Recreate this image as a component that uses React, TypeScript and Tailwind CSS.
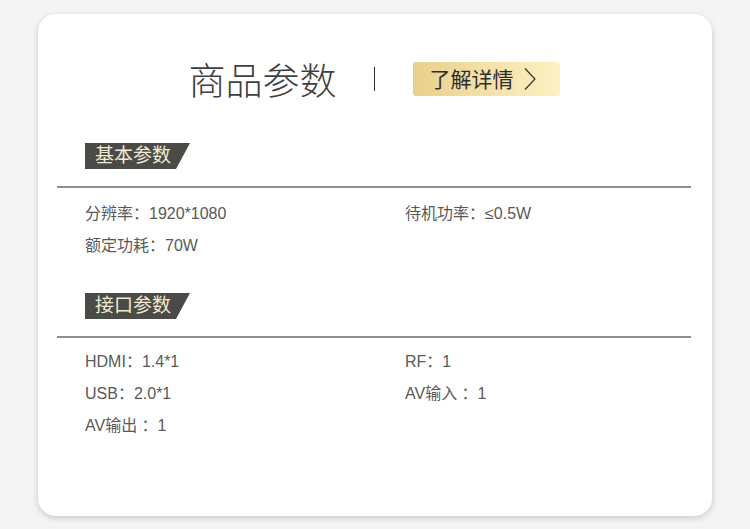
import React from 'react'

const basic = [
  ['分辨率：1920*1080', '待机功率：≤0.5W'],
  ['额定功耗：70W', ''],
]

const ports = [
  ['HDMI：1.4*1', 'RF：1'],
  ['USB：2.0*1', 'AV输入 ：1'],
  ['AV输出 ：1', ''],
]

const Tag = ({ label }: { label: string }) => (
  <div className="ml-[28px] w-[105px] h-[26px] bg-[#4a4a47] text-[#f1e9d0] text-[19px] leading-[26px] pl-[10px] [clip-path:polygon(0_0,100%_0,calc(100%-14px)_100%,0_100%)]">
    {label}
  </div>
)

const Rows = ({ rows, tight }: { rows: string[][]; tight?: boolean }) => (
  <div className={tight ? 'pt-[8px]' : 'pt-[10px]'}>
    {rows.map((r, i) => (
      <div key={i} className="grid grid-cols-[320px_1fr] pl-[28px] h-[32px] items-center text-[16px] text-[#595959]">
        <span>{r[0]}</span>
        <span>{r[1]}</span>
      </div>
    ))}
  </div>
)

const App = () => {
  return (
    <div className="w-[750px] h-[529px] bg-[#f4f4f4] pt-[14px] font-['Liberation_Sans','Noto_Sans_CJK_SC',sans-serif]">
      <div className="mx-[38px] h-[502px] bg-white rounded-[18px] shadow-[0_2px_6px_rgba(0,0,0,0.18)] pt-[48px] pl-[19px] pr-[21px]">
        <div className="flex items-center justify-center h-[34px]">
          <span className="text-[37px] leading-none text-[#3f3f3f] font-['Noto_Sans_CJK_SC',sans-serif] font-light">商品参数</span>
          <div className="ml-[37px] w-px h-[24px] bg-[#333]" />
          <div className="ml-[38px] w-[147px] h-[34px] rounded-[3px] bg-gradient-to-r from-[#e9d08c] to-[#fdf2c4] flex items-center pl-[17px] text-[21px] text-[#2e2e2e] font-['Noto_Sans_CJK_SC',sans-serif]">
            了解详情
            <svg className="ml-[9px]" width="14" height="24" viewBox="0 0 14 24" fill="none">
              <path d="M2 1.5 L12 12 L2 22.5" stroke="#333" strokeWidth="1.2" />
            </svg>
          </div>
        </div>

        <div className="mt-[47px]">
          <Tag label="基本参数" />
          <div className="mt-[17px] h-[2px] bg-[#8e8e8e]" />
          <Rows rows={basic} />
        </div>

        <div className="mt-[31px]">
          <Tag label="接口参数" />
          <div className="mt-[17px] h-[2px] bg-[#8e8e8e]" />
          <Rows rows={ports} tight />
        </div>
      </div>
    </div>
  )
}

export default App
